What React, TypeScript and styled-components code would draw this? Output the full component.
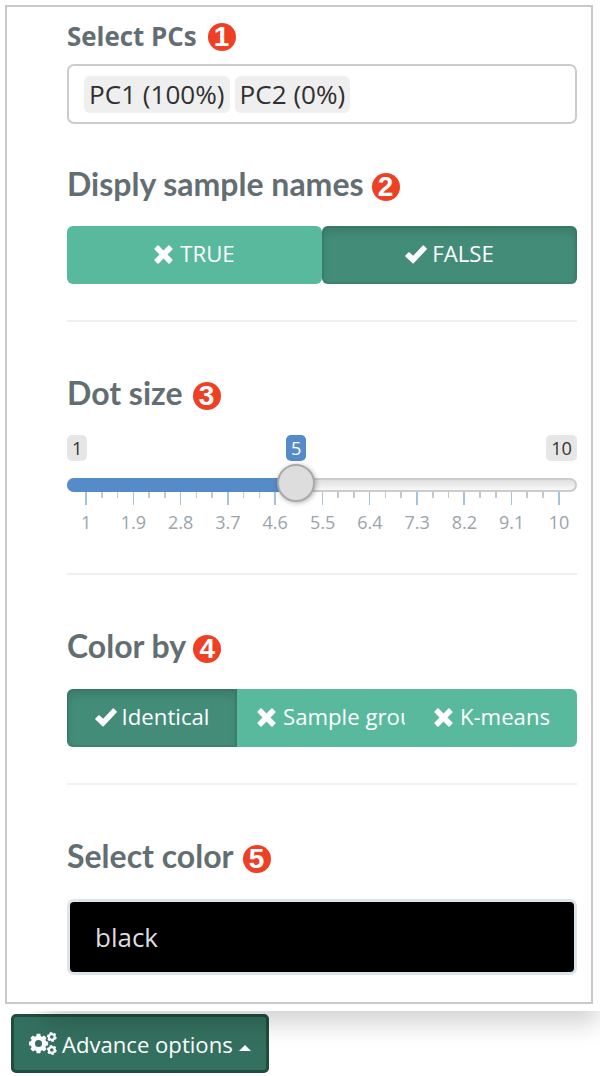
import React from "react";
import styled, { createGlobalStyle, css } from "styled-components";

const Global = createGlobalStyle`
  * { box-sizing: border-box; }
  html, body { margin: 0; background: #fff; }
  body { font-family: "Open Sans", "Noto Sans", sans-serif; color: #333; }
`;

const Page = styled.div`
  position: relative;
  width: 600px;
  height: 1076px;
  padding: 5px 7px 0 5px;
  overflow: hidden;
  background: #fff;
`;

const Panel = styled.main`
  display: flex;
  flex-direction: column;
  height: 999px;
  padding: 16px 14px 0 60px;
  border: 2px solid #c9c9c9;
`;

const Heading = styled.div<{ $gap: number; $top?: number; $bottom: number }>`
  display: flex;
  align-items: center;
  gap: ${(p) => p.$gap}px;
  height: 28px;
  margin: ${(p) => p.$top ?? 0}px 0 ${(p) => p.$bottom}px;
  white-space: nowrap;
`;

const LabelText = styled.label`
  padding-bottom: 2px;
  font-size: 25.9px;
  font-weight: 700;
  line-height: 28px;
  color: #636e72;
`;

const HeadingText = styled.h4`
  margin: 0;
  padding-bottom: 6px;
  font-family: Lato, sans-serif;
  font-size: 32px;
  font-weight: 700;
  line-height: 28px;
  color: #636e72;
`;

const Badge = styled.span`
  display: flex;
  flex: none;
  align-items: center;
  justify-content: center;
  width: 28px;
  height: 28px;
  border-radius: 50%;
  background: #ee4025;
  color: #fff;
  font: 700 28px/28px "Liberation Sans", sans-serif;
`;

const Divider = styled.hr`
  width: 100%;
  height: 2px;
  margin: 36px 0 0;
  border: 0;
  background: #ecf0f1;
`;

const SelectBox = styled.div`
  display: flex;
  flex: none;
  align-items: center;
  gap: 5px;
  height: 60px;
  padding: 1px 15px 0 15px;
  border: 2px solid #ccc;
  border-radius: 7px;
`;

const Tag = styled.span`
  height: 37px;
  padding: 0 5px;
  border-radius: 6px;
  background: #efefef;
  color: #303030;
  font-size: 26.1px;
  line-height: 37px;
  white-space: nowrap;
`;

const ButtonGroup = styled.div`
  display: flex;
  flex: none;
  height: 58px;
`;

const Toggle = styled.button<{ $active?: boolean; $radius: string; $pad?: string; $width: number }>`
  display: flex;
  flex: 0 0 ${(p) => p.$width}px;
  align-items: center;
  justify-content: ${(p) => (p.$pad ? "flex-start" : "center")};
  min-width: 0;
  padding: ${(p) => p.$pad ?? "0"};
  border: 0;
  border-radius: ${(p) => p.$radius};
  background: #58b99d;
  color: #fff;
  font: 400 22.2px/30px "Open Sans", sans-serif;
  white-space: nowrap;
  ${(p) =>
    p.$active &&
    css`
      background: #438d78;
      box-shadow: inset 0 0 0 2px rgba(45, 110, 90, 0.3), inset 0 6px 10px rgba(0, 0, 0, 0.125);
    `}
`;

const ToggleText = styled.span<{ $gap: number }>`
  margin-left: ${(p) => p.$gap}px;
  padding-bottom: 2px;
  overflow: hidden;
`;

const Mark = styled.svg`
  flex: none;
  margin-bottom: 2px;
  fill: currentColor;
`;

const Slider = styled.div`
  position: relative;
  flex: none;
  height: 102px;
`;

const ValueRow = styled.div`
  display: flex;
  justify-content: space-between;
  height: 26px;
  margin-bottom: 17px;
`;

const Value = styled.span<{ $current?: boolean }>`
  height: 26px;
  padding: 0 5px;
  border-radius: 5px;
  background: ${(p) => (p.$current ? "#548bc8" : "#e6e6e6")};
  color: ${(p) => (p.$current ? "#fff" : "#333")};
  font-size: 18.2px;
  line-height: 27px;
`;

const CurrentSlot = styled.div`
  flex: 1;
  padding-left: 198.6px;
  display: flex;
`;

const Track = styled.div`
  height: 14px;
  border: 2px solid #ccc;
  border-radius: 8px;
  background: linear-gradient(#e0e0e0, #f8f8f8);
`;

const Fill = styled.div`
  width: 228px;
  height: 14px;
  margin: -2px 0 0 -2px;
  border-radius: 8px 0 0 8px;
  background: #548bc8;
`;

const Handle = styled.div`
  position: absolute;
  top: 29px;
  left: 209.5px;
  width: 38px;
  height: 38px;
  border: 2px solid #aaa;
  border-radius: 50%;
  background: #ddd;
  box-shadow: 1px 1px 5px rgba(0, 0, 0, 0.3);
`;

const Ticks = styled.div`
  display: flex;
  width: 488.8px;
  margin-left: 11.1px;
  height: 13px;
`;

const TickSlot = styled.span`
  display: flex;
  flex: 1 1 0;
  justify-content: center;
`;

const Tick = styled.i<{ $major: boolean; $w: number }>`
  width: ${(p) => p.$w}px;
  height: ${(p) => (p.$major ? 13 : 6)}px;
  background: ${(p) => (p.$major ? "#a5c2e3" : "#c8c8c8")};
`;

const TickLabels = styled.div`
  display: flex;
  width: 520.3px;
  margin-left: -4.6px;
  padding-top: 5px;
`;

const TickLabel = styled.span`
  flex: 1 1 0;
  text-align: center;
  color: #99a4ac;
  font-size: 18px;
  line-height: 25px;
`;

const ColorInput = styled.div`
  flex: none;
  height: 76px;
  padding: 0 25px;
  border: 3px solid #dce4ec;
  border-radius: 7px;
  background: #000;
  color: #ddd;
  font-size: 26px;
  line-height: 71px;
`;

const OptionsButton = styled.button`
  display: flex;
  align-items: center;
  width: 258px;
  height: 59px;
  margin: 10px 0 0 6px;
  padding: 0 15px;
  border: 3px solid #1f4d40;
  border-radius: 5px;
  background: #34705f;
  color: #fff;
  font: 400 22.1px/30px "Open Sans", sans-serif;
  white-space: nowrap;
`;

const OptionsText = styled.span`
  margin: 0 6px 0 5px;
`;

const Caret = styled.i`
  margin-top: 8px;
  border: 6px solid transparent;
  border-top: 0;
  border-bottom-color: #fff;
`;

const ShadowClip = styled.div`
  position: absolute;
  top: 1011px;
  left: 0;
  width: 600px;
  height: 65px;
  overflow: hidden;
  pointer-events: none;
`;

const ShadowCaster = styled.div`
  width: 554px;
  height: 100px;
  margin: -100px 0 0 45px;
  box-shadow: 0 12px 24px rgba(0, 0, 0, 0.18);
`;

const Cross = () => (
  <Mark width="19" height="19" viewBox="0 0 19 19">
    <path d="M4.6.5 9.5 5.4 14.4.5Q15 0 15.6.6L18.4 3.4Q19 4 18.4 4.6L13.5 9.5 18.4 14.4Q19 15 18.4 15.6L15.6 18.4Q15 19 14.4 18.5L9.5 13.6 4.6 18.5Q4 19 3.4 18.4L.6 15.6Q0 15 .6 14.4L5.5 9.5.6 4.6Q0 4 .6 3.4L3.4.6Q4 0 4.6.5Z" />
  </Mark>
);

const Check = () => (
  <Mark width="22" height="19" viewBox="0 0 22 19">
    <path d="M.4 10.4 3.4 7.4Q4 6.9 4.6 7.4L8.2 10.7 17.6.7Q18.2.1 18.8.6L21.6 3.3Q22.2 3.9 21.6 4.5L8.7 18.2Q8.1 18.8 7.5 18.2L.4 11.5Q-.1 10.9.4 10.4Z" />
  </Mark>
);

const gear = (cx: number, cy: number, r: number, teeth: number, start: number) => {
  const step = (Math.PI * 2) / teeth;
  const points: string[] = [];
  for (let i = 0; i < teeth; i++) {
    const a = start + i * step;
    for (const [k, rad] of [[-0.36, 0.8], [-0.24, 1], [0.24, 1], [0.36, 0.8]]) {
      const t = a + k * step;
      points.push(`${(cx + Math.cos(t) * r * rad).toFixed(2)} ${(cy + Math.sin(t) * r * rad).toFixed(2)}`);
    }
  }
  const h = r * 0.36;
  return `M${points.join("L")}ZM${cx - h} ${cy}a${h} ${h} 0 1 0 ${2 * h} 0a${h} ${h} 0 1 0 ${-2 * h} 0Z`;
};

const Gears = () => (
  <Mark width="28" height="24" viewBox="0 0 28 24" fillRule="evenodd">
    <path d={gear(9.5, 12.5, 9.8, 8, 0)} />
    <path d={gear(22.8, 6, 5, 6, 0.3)} />
    <path d={gear(22.8, 19, 5, 6, 0.3)} />
  </Mark>
);

const tickWidths = [
  2, 2, 1, 1, 2, 2, 1, 1, 2, 2, 1, 1, 2, 2, 2, 1, 2, 2, 1, 1, 2, 2, 2, 1, 2, 2, 2, 1, 2, 2, 2,
];
const tickLabels = ["1", "1.9", "2.8", "3.7", "4.6", "5.5", "6.4", "7.3", "8.2", "9.1", "10"];

export default function App() {
  return (
    <Page>
      <Global />
      <Panel>
        <Heading $gap={11} $bottom={13}>
          <LabelText>Select PCs</LabelText>
          <Badge>1</Badge>
        </Heading>
        <SelectBox>
          <Tag>PC1 (100%)</Tag>
          <Tag>PC2 (0%)</Tag>
        </SelectBox>

        <Heading $gap={8} $top={49} $bottom={25}>
          <HeadingText>Disply sample names</HeadingText>
          <Badge>2</Badge>
        </Heading>
        <ButtonGroup>
          <Toggle $width={255} $radius="6px"><Cross /><ToggleText $gap={7}>TRUE</ToggleText></Toggle>
          <Toggle $width={255} $radius="6px" $active><Check /><ToggleText $gap={5}>FALSE</ToggleText></Toggle>
        </ButtonGroup>
        <Divider />

        <Heading $gap={10} $top={60} $bottom={25}>
          <HeadingText>Dot size</HeadingText>
          <Badge>3</Badge>
        </Heading>
        <Slider>
          <ValueRow>
            <Value>1</Value>
            <CurrentSlot><Value $current>5</Value></CurrentSlot>
            <Value>10</Value>
          </ValueRow>
          <Track><Fill /></Track>
          <Ticks>
            {tickWidths.map((w, i) => (
              <TickSlot key={i}><Tick $major={i % 3 === 0} $w={w} /></TickSlot>
            ))}
          </Ticks>
          <TickLabels>
            {tickLabels.map((t) => <TickLabel key={t}>{t}</TickLabel>)}
          </TickLabels>
          <Handle />
        </Slider>
        <Divider />

        <Heading $gap={7} $top={60} $bottom={26}>
          <HeadingText>Color by</HeadingText>
          <Badge>4</Badge>
        </Heading>
        <ButtonGroup>
          <Toggle $width={170} $radius="6px 0 0 6px" $active><Check /><ToggleText $gap={5}>Identical</ToggleText></Toggle>
          <Toggle $width={170} $radius="0" $pad="0 2px 0 20px"><Cross /><ToggleText $gap={7}>Sample group</ToggleText></Toggle>
          <Toggle $width={170} $radius="0 6px 6px 0"><Cross /><ToggleText $gap={7}>K-means</ToggleText></Toggle>
        </ButtonGroup>
        <Divider />

        <Heading $gap={9} $top={60} $bottom={26}>
          <HeadingText>Select color</HeadingText>
          <Badge>5</Badge>
        </Heading>
        <ColorInput>black</ColorInput>
      </Panel>
      <OptionsButton>
        <Gears />
        <OptionsText>Advance options</OptionsText>
        <Caret />
      </OptionsButton>
      <ShadowClip><ShadowCaster /></ShadowClip>
    </Page>
  );
}
